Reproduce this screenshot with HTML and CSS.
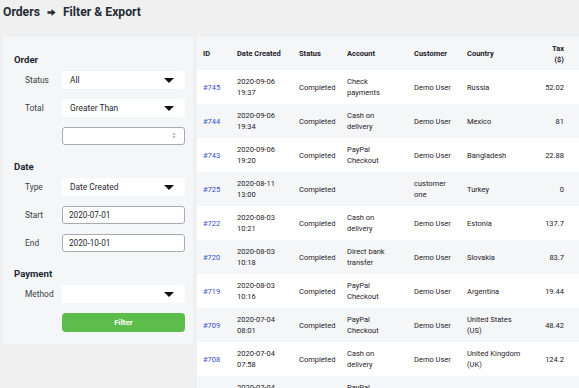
FILE: index.html
```html
<!DOCTYPE html>
<html lang="en">
    <head>
        <meta charset="UTF-8" />
        <meta name="viewport" content="width=device-width, initial-scale=1.0" />
        <title>Orders - Filter &amp; Export</title>
        <link rel="stylesheet" href="styles.css">
    </head>

    <body>
        <h1 class="page-title">
            Orders
            <svg class="title-arrow" viewBox="0 0 10 10" width="9" height="9">
                <path d="M0.5 3.7 H5 V1 L9.6 5 L5 9 V6.3 H0.5 Z" fill="currentColor" />
            </svg>
            Filter &amp; Export
        </h1>

        <div class="layout">
            <aside class="filters">
                <h2 class="group-title">Order</h2>
                <div class="field">
                    <label>Status</label>
                    <div class="select">All</div>
                </div>
                <div class="field">
                    <label>Total</label>
                    <div class="select">Greater Than</div>
                </div>
                <div class="field">
                    <label></label>
                    <div class="input number">
                        <input type="text" value="" />
                        <span class="spinner">
                            <svg viewBox="0 0 4 8" width="4" height="7">
                                <path d="M0.3 3.2 L2 0.8 L3.7 3.2 Z M0.3 4.8 L2 7.2 L3.7 4.8 Z" fill="currentColor" />
                            </svg>
                        </span>
                    </div>
                </div>

                <h2 class="group-title">Date</h2>
                <div class="field">
                    <label>Type</label>
                    <div class="select">Date Created</div>
                </div>
                <div class="field">
                    <label>Start</label>
                    <div class="input"><input type="text" value="2020-07-01" /></div>
                </div>
                <div class="field">
                    <label>End</label>
                    <div class="input"><input type="text" value="2020-10-01" /></div>
                </div>

                <h2 class="group-title">Payment</h2>
                <div class="field">
                    <label>Method</label>
                    <div class="select"></div>
                </div>
                <div class="field">
                    <label></label>
                    <button class="filter-btn">Filter</button>
                </div>
            </aside>

            <div class="table-wrap">
                <table class="orders">
                    <colgroup>
                        <col class="c-id" />
                        <col class="c-date" />
                        <col class="c-status" />
                        <col class="c-account" />
                        <col class="c-customer" />
                        <col class="c-country" />
                        <col class="c-tax" />
                    </colgroup>
                    <thead>
                        <tr>
                            <th>ID</th>
                            <th>Date Created</th>
                            <th>Status</th>
                            <th class="account">Account</th>
                            <th>Customer</th>
                            <th>Country</th>
                            <th class="num">Tax<br />($)</th>
                        </tr>
                    </thead>
                    <tbody>
                        <tr>
                            <td><a href="#">#745</a></td>
                            <td>2020-09-06 19:37</td>
                            <td>Completed</td>
                            <td class="account">Check payments</td>
                            <td>Demo User</td>
                            <td>Russia</td>
                            <td class="num">52.02</td>
                        </tr>
                        <tr>
                            <td><a href="#">#744</a></td>
                            <td>2020-09-06 19:34</td>
                            <td>Completed</td>
                            <td class="account">Cash on delivery</td>
                            <td>Demo User</td>
                            <td>Mexico</td>
                            <td class="num">81</td>
                        </tr>
                        <tr>
                            <td><a href="#">#743</a></td>
                            <td>2020-09-06 19:20</td>
                            <td>Completed</td>
                            <td class="account">PayPal Checkout</td>
                            <td>Demo User</td>
                            <td>Bangladesh</td>
                            <td class="num">22.88</td>
                        </tr>
                        <tr>
                            <td><a href="#">#725</a></td>
                            <td>2020-08-11 13:00</td>
                            <td>Completed</td>
                            <td class="account"></td>
                            <td>customer one</td>
                            <td>Turkey</td>
                            <td class="num">0</td>
                        </tr>
                        <tr>
                            <td><a href="#">#722</a></td>
                            <td>2020-08-03 10:21</td>
                            <td>Completed</td>
                            <td class="account">Cash on delivery</td>
                            <td>Demo User</td>
                            <td>Estonia</td>
                            <td class="num">137.7</td>
                        </tr>
                        <tr>
                            <td><a href="#">#720</a></td>
                            <td>2020-08-03 10:18</td>
                            <td>Completed</td>
                            <td class="account">Direct bank transfer</td>
                            <td>Demo User</td>
                            <td>Slovakia</td>
                            <td class="num">83.7</td>
                        </tr>
                        <tr>
                            <td><a href="#">#719</a></td>
                            <td>2020-08-03 10:16</td>
                            <td>Completed</td>
                            <td class="account">PayPal Checkout</td>
                            <td>Demo User</td>
                            <td>Argentina</td>
                            <td class="num">19.44</td>
                        </tr>
                        <tr>
                            <td><a href="#">#709</a></td>
                            <td>2020-07-04 08:01</td>
                            <td>Completed</td>
                            <td class="account">PayPal Checkout</td>
                            <td>Demo User</td>
                            <td>United States (US)</td>
                            <td class="num">48.42</td>
                        </tr>
                        <tr>
                            <td><a href="#">#708</a></td>
                            <td>2020-07-04 07:58</td>
                            <td>Completed</td>
                            <td class="account">Cash on delivery</td>
                            <td>Demo User</td>
                            <td>United Kingdom (UK)</td>
                            <td class="num">124.2</td>
                        </tr>
                        <tr>
                            <td><a href="#">#707</a></td>
                            <td>2020-07-04 07:41</td>
                            <td>Completed</td>
                            <td class="account">PayPal Checkout</td>
                            <td>Demo User</td>
                            <td>Germany</td>
                            <td class="num">10.5</td>
                        </tr>
                    </tbody>
                </table>
            </div>
        </div>
    </body>
</html>
```

FILE: styles.css
```css
html,
body {
    margin: 0;
    padding: 0;
    background: #f0f0f0;
    height: 100%;
    overflow: hidden;
}

body {
    font-family: "Roboto", "Liberation Sans", sans-serif;
    color: #2a2e38;
    padding-left: 3px;
}

.page-title {
    margin: 4px 0 17px;
    font-size: 12.2px;
    line-height: 16px;
    font-weight: 700;
    color: #262b36;
    display: flex;
    align-items: center;
    gap: 6px;
}

.title-arrow {
    margin: 0 1px;
}

.layout {
    display: flex;
    align-items: flex-start;
    gap: 4px;
}

/* left filter panel */
.filters {
    width: 190px;
    flex: none;
    box-sizing: border-box;
    padding: 17px 8px 12px 11px;
    background: #f5f6f8;
    font-size: 8.4px;
}

.group-title {
    margin: 16px 0 5px;
    font-size: 9.6px;
    line-height: 12px;
    font-weight: 700;
    color: #242833;
}

.group-title:first-child {
    margin-top: 0;
}

.field {
    display: grid;
    grid-template-columns: 48px 123px;
    align-items: center;
    margin-bottom: 10px;
}

.field:last-child {
    margin-bottom: 0;
}

.field label {
    padding-left: 11px;
    color: #3a3e46;
}

.select {
    position: relative;
    height: 18px;
    line-height: 18px;
    padding-left: 8px;
    background: #fff;
    border-radius: 2px;
    color: #26292f;
}

.select::after {
    content: "";
    position: absolute;
    right: 11px;
    top: 7px;
    border-left: 5.5px solid transparent;
    border-right: 5.5px solid transparent;
    border-top: 5px solid #111;
}

.input {
    position: relative;
    height: 18px;
}

.input input {
    width: 100%;
    height: 18px;
    box-sizing: border-box;
    margin: 0;
    padding: 0 6px;
    border: 1px solid #a9abb0;
    border-radius: 3px;
    background: #fff;
    font-family: inherit;
    font-size: 8.2px;
    color: #26292f;
    outline: none;
}

.spinner {
    position: absolute;
    right: 9px;
    top: 5px;
    color: #9a9ca1;
    line-height: 0;
}

.filter-btn {
    height: 19px;
    margin: 0;
    border: none;
    border-radius: 4px;
    background: #5cbc4c;
    color: #fff;
    font-family: inherit;
    font-size: 8px;
    font-weight: 700;
}

/* orders table */
.table-wrap {
    flex: 1;
    overflow: hidden;
}

.orders {
    width: 382px;
    table-layout: fixed;
    border-collapse: collapse;
    font-size: 7.5px;
    line-height: 11px;
    color: #1f2228;
}

.c-id { width: 34px; }
.c-date { width: 62px; }
.c-status { width: 48px; }
.c-account { width: 67px; }
.c-customer { width: 53px; }
.c-country { width: 70px; }
.c-tax { width: 48px; }

.orders th,
.orders td {
    padding: 0 6px;
    text-align: left;
    vertical-align: middle;
}

.orders .account {
    padding-right: 16px;
}

.orders th {
    height: 33px;
    font-weight: 700;
    color: #1d2027;
    background: #f5f6f8;
}

.orders td {
    height: 34px;
}

.orders .num {
    text-align: right;
    padding-right: 15px;
}

.orders tbody tr:nth-child(odd) {
    background: #fff;
}

.orders tbody tr:nth-child(even) {
    background: #f5f6f8;
}

.orders a {
    color: #3a4fcc;
    text-decoration: none;
}
```
